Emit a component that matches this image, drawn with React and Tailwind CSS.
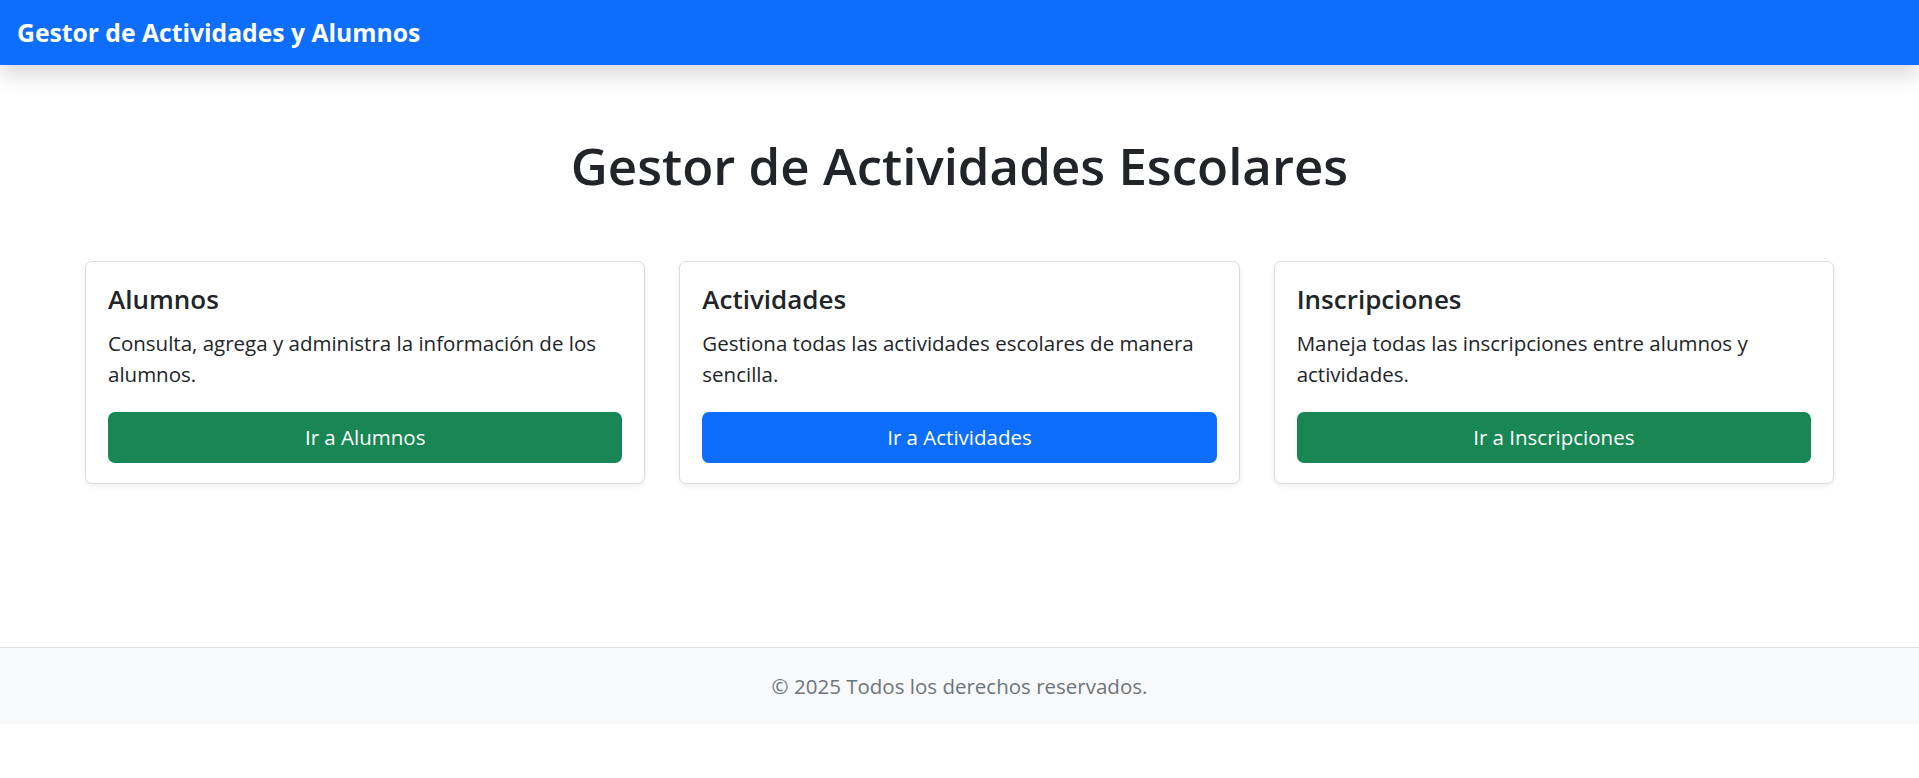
import React from "react";

const cards = [
  {
    title: "Alumnos",
    text: "Consulta, agrega y administra la información de los alumnos.",
    button: "Ir a Alumnos",
    color: "bg-[#198754]",
  },
  {
    title: "Actividades",
    text: "Gestiona todas las actividades escolares de manera sencilla.",
    button: "Ir a Actividades",
    color: "bg-[#0d6efd]",
  },
  {
    title: "Inscripciones",
    text: "Maneja todas las inscripciones entre alumnos y actividades.",
    button: "Ir a Inscripciones",
    color: "bg-[#198754]",
  },
];

const App = () => {
  return (
    <div className="min-h-screen bg-white font-['Open_Sans',sans-serif] text-[#212529]">
      <nav className="relative z-10 flex h-[65px] items-center bg-[#0d6efd] px-[17px] shadow-[0_10px_20px_rgba(0,0,0,0.15)]">
        <span className="text-[24.7px] font-bold text-white">
          Gestor de Actividades y Alumnos
        </span>
      </nav>

      <main className="px-[85px]">
        <h1 className="pt-[70px] text-center text-[51px] font-semibold leading-[60px]">
          Gestor de Actividades Escolares
        </h1>

        <div className="mt-[66px] grid grid-cols-3 gap-[34px]">
          {cards.map((card, index) => (
            <div
              key={index}
              className="rounded-[7px] border border-[#dcdcdc] bg-white px-[22px] pt-[22px] pb-[20px] shadow-[0_2px_5px_rgba(0,0,0,0.075)]"
            >
              <h5 className="mb-[14px] text-[26px] font-semibold leading-[30px]">
                {card.title}
              </h5>
              <p className="mb-[22px] text-[20.5px] leading-[31px]">{card.text}</p>
              <button
                className={`h-[51px] w-full rounded-[7px] text-[20.5px] text-white ${card.color}`}
              >
                {card.button}
              </button>
            </div>
          ))}
        </div>
      </main>

      <footer className="mt-[163px] flex h-[77px] items-center justify-center border-t border-[#dee2e6] bg-[#f8f9fa] text-[20.5px] text-[#6c757d]">
        © 2025 Todos los derechos reservados.
      </footer>
    </div>
  );
};

export default App;
